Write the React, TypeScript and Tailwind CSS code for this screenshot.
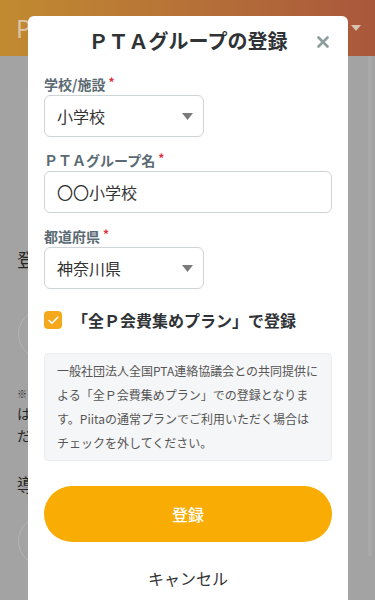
import { Check } from "lucide-react"

const jp = { fontFamily: '"Noto Sans CJK JP", "Noto Sans", sans-serif' }

function Label({ text }: { text: string }) {
  return (
    <div className="flex items-start h-[20px] leading-[20px] text-[14px] font-bold text-[#5b6a72]">
      <span>{text}</span>
      <span className="ml-[3px] text-[12px] leading-[16px] text-[#e02e3b]">*</span>
    </div>
  )
}

function SelectBox({ value }: { value: string }) {
  return (
    <div className="mt-[1px] w-[160px] h-[42px] border border-[#cfd4d6] rounded-[6px] flex items-center justify-between pl-[12px] pr-[10px]">
      <span className="text-[16px] text-[#333]">{value}</span>
      <svg width="11" height="7" viewBox="0 0 11 7">
        <path d="M0 0h11L5.5 7z" fill="#7a7a7a" />
      </svg>
    </div>
  )
}

function Background() {
  return (
    <div className="w-full h-full flex flex-col bg-[#a3a3a3]">
      <div className="h-[56px] shrink-0 bg-gradient-to-r from-[#c28b30] to-[#a9573b] flex items-center justify-between pl-[16px] pr-[14px]">
        <span className="text-[24px] text-[#dcc5a6]">P</span>
        <svg width="10" height="6" viewBox="0 0 10 6">
          <path d="M0 0h10L5 6z" fill="#d9c0b0" />
        </svg>
      </div>
      <div className="flex-1 flex">
        <div className="w-[368px] flex flex-col pl-[17px] text-[#262626]">
          <div className="h-[191px]" />
          <div className="text-[18px] leading-[24px]">登録</div>
          <div className="mt-[38px] ml-[1px] w-[50px] h-[50px] rounded-full border border-[#b4b4b4]" />
          <div className="mt-[27px] text-[10px] leading-[16px]">※</div>
          <div className="text-[14px] leading-[22px]">は</div>
          <div className="text-[14px] leading-[22px]">だ</div>
          <div className="mt-[26px] text-[18px] leading-[24px]">導入</div>
          <div className="mt-[20px] ml-[1px] w-[50px] h-[50px] rounded-full border border-[#b4b4b4]" />
        </div>
        <div className="w-[4px] bg-[#a9a9a9] mb-[44px]" />
      </div>
    </div>
  )
}

export default function App() {
  return (
    <div className="relative w-[375px] h-[600px] overflow-hidden" style={jp}>
      <Background />
      <div className="absolute left-[28px] top-[16px] w-[320px] h-[600px] bg-white rounded-t-[6px] px-[16px]">
        <div className="relative h-[50px] flex items-center justify-center">
          <h1 className="text-[20px] font-bold text-[#2f3336]">ＰＴＡグループの登録</h1>
          <svg className="absolute right-[3px] top-[20px]" width="12" height="12" viewBox="0 0 12 12">
            <path d="M1.5 1.5l9 9M10.5 1.5l-9 9" stroke="#8e9e9f" strokeWidth="2.6" strokeLinecap="round" />
          </svg>
        </div>

        <div className="mt-[8px]">
          <Label text="学校/施設" />
          <SelectBox value="小学校" />
        </div>

        <div className="mt-[13px]">
          <Label text="ＰＴＡグループ名" />
          <div className="mt-[1px] w-full h-[42px] border border-[#cfd4d6] rounded-[6px] flex items-center pl-[12px]">
            <span className="text-[16px] text-[#333]">〇〇小学校</span>
          </div>
        </div>

        <div className="mt-[13px]">
          <Label text="都道府県" />
          <SelectBox value="神奈川県" />
        </div>

        <div className="mt-[22px] flex items-center h-[18px]">
          <div className="w-[18px] h-[18px] rounded-[4px] bg-[#f6a81c] flex items-center justify-center">
            <Check size={13} strokeWidth={3} color="#fff" />
          </div>
          <span className="ml-[10px] text-[16px] font-bold text-[#2f3336]">「全Ｐ会費集めプラン」で登録</span>
        </div>

        <div className="mt-[24px] border border-[#ebedee] bg-[#f5f6f7] rounded-[4px] pl-[12px] pr-[4px] py-[5px] text-[12px] leading-[24px] text-[#555] whitespace-nowrap">
          一般社団法人全国PTA連絡協議会との共同提供に
          <br />
          よる「全Ｐ会費集めプラン」での登録となりま
          <br />
          す。Piitaの通常プランでご利用いただく場合は
          <br />
          チェックを外してください。
        </div>

        <button className="mt-[25px] w-full h-[56px] rounded-full bg-[#f8ac04] text-white text-[16px] font-medium">
          登録
        </button>

        <div className="mt-[24px] text-center text-[16px] leading-[24px] text-[#333]">キャンセル</div>
      </div>
    </div>
  )
}
